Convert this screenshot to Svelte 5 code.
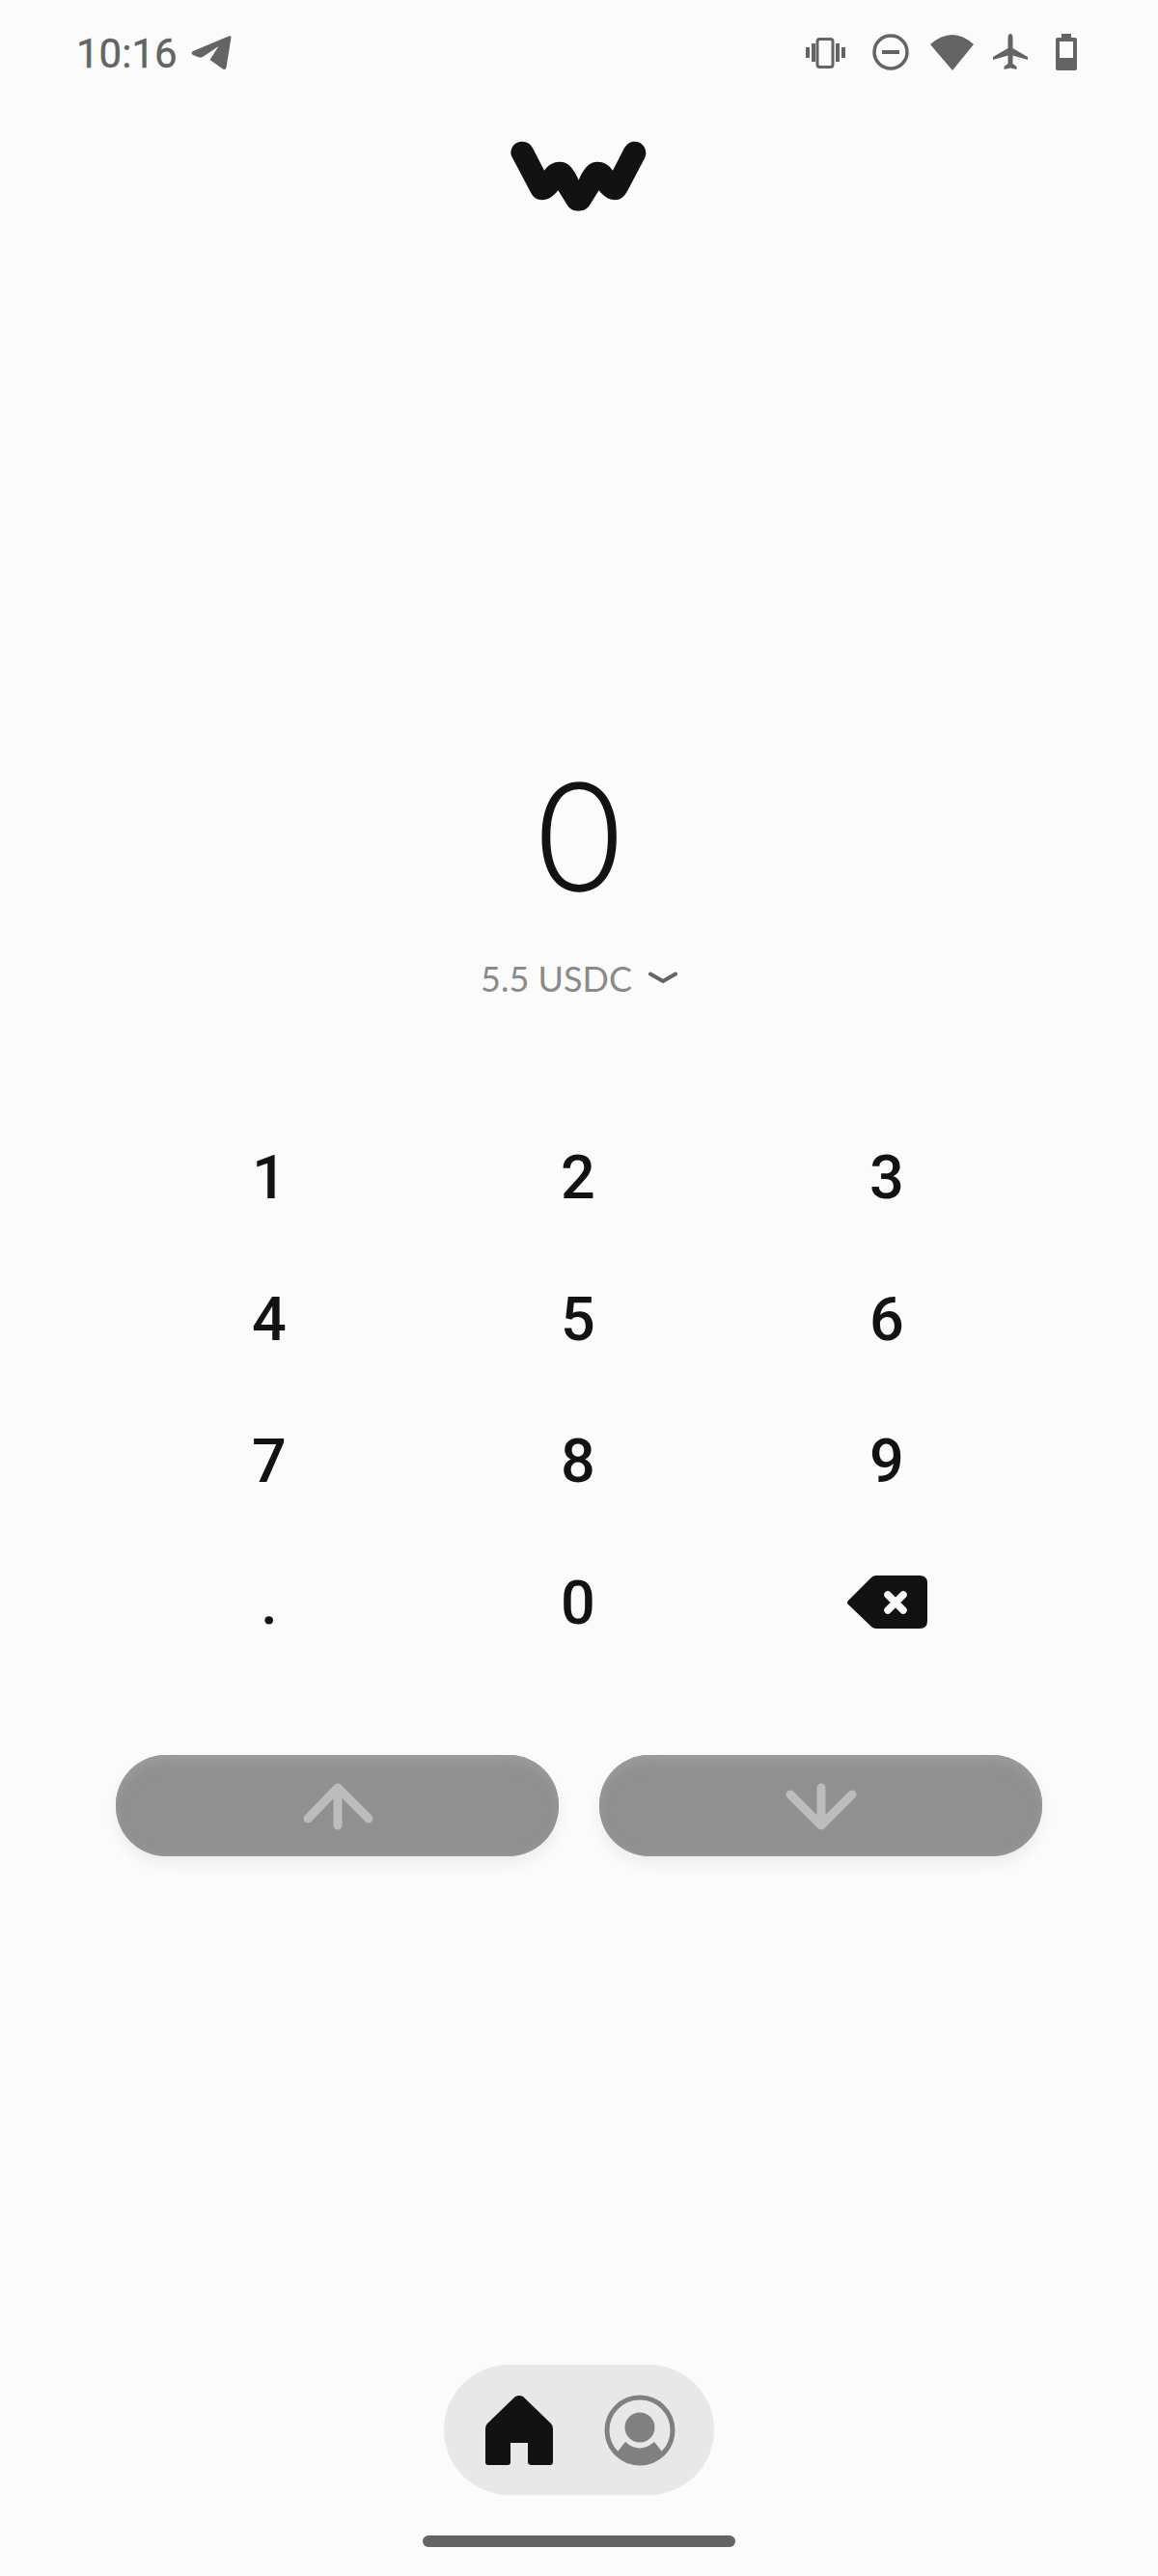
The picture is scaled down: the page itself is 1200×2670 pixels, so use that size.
<script>
  const keys = ['1','2','3','4','5','6','7','8','9','.','0'];
</script>

<div class="page">
  <header class="status">
    <div class="status-left">
      <span class="time">10:16</span>
      <svg class="tg" width="44" height="40" viewBox="196 37 44 40"><path d="M199 55 L236 39.500 Q239 38.500 238.500 41 L233.500 72 Q232.500 75 230 73.500 L216.500 64 L225.500 50 L209 61 Q206.500 62 204 61 L199 59 Q196 57 199 55Z" fill="#636563"/></svg>
    </div>
    <div class="status-right">
      <svg width="52" height="38" viewBox="834 36 52 38" fill="#636563"><rect x="847" y="41.500" width="16" height="29" rx="2.500" fill="none" stroke="#636563" stroke-width="3"/><rect x="835" y="50" width="4" height="11"/><rect x="841" y="46" width="4" height="19"/><rect x="866" y="46" width="4" height="19"/><rect x="872" y="50" width="4" height="11"/></svg>
      <svg width="42" height="38" viewBox="904 36 42 38"><circle cx="923" cy="55" r="17" fill="none" stroke="#636563" stroke-width="3.500"/><rect x="914" y="53" width="18" height="4" fill="#636563"/></svg>
      <svg width="46" height="38" viewBox="964 35 46 38"><path d="M964 46 Q987 26 1009 46 L987 73Z" fill="#636563"/></svg>
      <svg width="38" height="38" viewBox="1028 36 38 38"><path d="M1044.500 41 Q1044.500 36 1047 36 Q1049.500 36 1049.500 41 V51 L1065 60 V63 L1049.500 58.500 V67 L1053.500 70 V73 L1047 71.500 L1040.500 73 V70 L1044.500 67 V58.500 L1029 63 V60 L1044.500 51Z" fill="#636563"/></svg>
      <svg width="33" height="38" viewBox="1084 35 33 38"><path fill-rule="evenodd" d="M1100 35 H1110 V39 H1114 Q1116 39 1116 41 V71 Q1116 73 1114 73 H1096 Q1094 73 1094 71 V41 Q1094 39 1096 39 H1100Z M1098 43 V60 H1112 V43Z" fill="#636563"/></svg>
    </div>
  </header>

  <div class="logo">
    <svg width="200" height="110" viewBox="0 0 600 330"><path d="M123 80 C143 80 152 92 158 104 L192 170 C205 152 222 143 240 143 C265 143 282 160 299 200 C316 160 333 143 358 143 C376 143 393 152 405 170 L440 102 C448 88 458 80 473 80 C495 80 508 98 508 115 C508 122 506 128 503 134 L450 235 C440 253 428 262 412 262 C392 262 376 250 362 232 L332 280 C322 292 312 296 298 296 C284 296 274 292 265 280 L235 232 C221 250 205 262 185 262 C168 262 156 253 148 235 L95 134 C91 128 88 122 88 115 C88 96 102 80 123 80Z" fill="#121212"/></svg>
  </div>

  <section class="amount">
    <div class="value">0</div>
    <div class="sub"><span>5.5 USDC</span><svg width="30" height="14" viewBox="0 0 30 14"><path d="M2 2.500 L15 10 L28 2.500" fill="none" stroke="#636563" stroke-width="4" stroke-linecap="round" stroke-linejoin="round"/></svg></div>
  </section>

  <section class="pad">
    {#each keys as k}
      <div class="key"><span class="digit">{k}</span></div>
    {/each}
    <div class="key">
      <svg width="84" height="56" viewBox="877 1633 84 56"><path d="M908 1633 H953 Q961 1633 961 1641 V1680 Q961 1688 953 1688 H908 Q905 1688 903 1686 L879 1663 Q877 1661 879 1659 L903 1635 Q905 1633 908 1633Z" fill="#121212"/><path d="M920 1653 L936 1669 M936 1653 L920 1669" stroke="#fbfbfb" stroke-width="7.500" stroke-linecap="round"/></svg>
    </div>
  </section>

  <section class="actions">
    <div class="btn"><svg width="76" height="50" viewBox="311 1846 76 50"><path d="M318 1884 L349 1852 L381 1884 M349 1852 V1891" fill="none" stroke="#bcbcbc" stroke-width="9" stroke-linecap="round" stroke-linejoin="round"/></svg></div>
    <div class="btn"><svg width="76" height="50" viewBox="812 1846 76 50"><path d="M818 1859 L850 1891 L882 1859 M850 1891 V1852" fill="none" stroke="#bcbcbc" stroke-width="9" stroke-linecap="round" stroke-linejoin="round"/></svg></div>
  </section>

  <nav class="nav">
    <svg width="72" height="74" viewBox="502 2482 72 74"><path fill-rule="evenodd" d="M534 2484 Q538 2482 542 2484 L571 2512 Q573 2514 573 2517 V2552 Q573 2555 570 2555 H551 Q547 2555 547 2552 V2532 H529 V2552 Q529 2555 526 2555 H506 Q503 2555 503 2552 V2517 Q503 2514 505 2512Z" fill="#121212"/></svg>
    <svg width="74" height="74" viewBox="626 2482 74 74"><circle cx="663" cy="2519" r="34" fill="none" stroke="#808080" stroke-width="5"/><circle cx="663" cy="2516" r="15.500" fill="#808080"/><path d="M640 2541 L648 2531 Q663 2544 678 2531 L686 2541 Q663 2565 640 2541Z" fill="#808080"/></svg>
  </nav>
  <div class="homebar"></div>
</div>

<style>
  :global(body) { margin: 0; background: #fbfbfb; }
  .page {
    width: 1200px;
    height: 2670px;
    background: #fbfbfb;
    display: flex;
    flex-direction: column;
    font-family: Lato, "Noto Sans", sans-serif;
    color: #121212;
    overflow: hidden;
  }
  .status {
    height: 108px;
    padding: 0 83px 0 79px;
    display: flex;
    align-items: center;
    justify-content: space-between;
    box-sizing: border-box;
  }
  .status-left { display: flex; align-items: center; gap: 13px; }
  .time {
    font-family: Roboto, sans-serif;
    font-size: 42px;
    font-weight: 400;
    line-height: 48px;
    color: #636563;
    padding-top: 3px;
    -webkit-text-stroke: 0.4px #636563;
  }
  .tg { margin-top: 2px; }
  .status-right { display: flex; align-items: center; gap: 18px; }
  .logo { display: flex; justify-content: center; margin-top: 12px; height: 110px; }
  .amount {
    margin-top: 538px;
    display: flex;
    flex-direction: column;
    align-items: center;
  }
  .value {
    font-size: 156px;
    font-weight: 300;
    line-height: 190px;
    transform: scaleX(0.96);
    -webkit-text-stroke: 1.5px #121212;
  }
  .sub {
    margin-top: 35px;
    display: flex;
    align-items: center;
    gap: 17px;
    font-size: 36px;
    line-height: 42px;
    font-weight: 400;
    color: #8a8a8a;
  }
  .pad {
    margin: 111px 121px 0 119px;
    display: grid;
    grid-template-columns: repeat(3, 320px);
    grid-auto-rows: 147px;
  }
  .key { display: flex; align-items: center; justify-content: center; }
  .digit {
    font-family: Roboto, sans-serif;
    font-size: 63px;
    line-height: 1;
    font-weight: 500;
    padding-top: 2px;
  }
  .actions {
    margin: 85px 120px 0;
    display: grid;
    grid-template-columns: 1fr 1fr;
    gap: 42px;
  }
  .btn {
    height: 105px;
    border-radius: 52px;
    background: #909090;
    box-shadow: inset 0 12px 14px -6px #9c9c9c, inset 0 0 10px #989898, 0 8px 16px rgba(0, 0, 0, 0.06);
    display: flex;
    align-items: center;
    justify-content: center;
  }
  .nav {
    margin: auto auto 0;
    box-sizing: border-box;
    padding-left: 2px;
    width: 280px;
    height: 135px;
    border-radius: 68px;
    background: #e8e8e8;
    display: flex;
    align-items: center;
    justify-content: center;
    gap: 52px;
  }
  .homebar {
    width: 324px;
    height: 12px;
    border-radius: 6px;
    background: #636563;
    margin: 42px auto 30px;
  }
</style>
